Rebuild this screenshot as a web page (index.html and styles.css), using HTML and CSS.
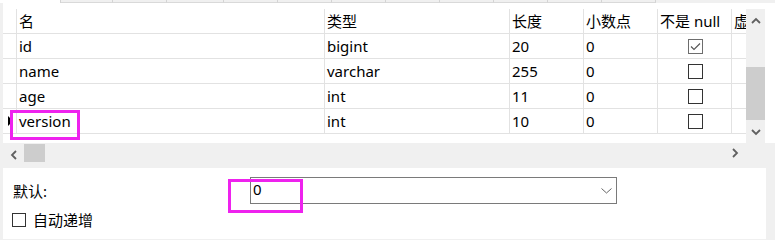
FILE: index.html
```html
<!DOCTYPE html>
<html>
<head>
<meta charset="utf-8">
<link rel="stylesheet" href="styles.css">
</head>
<body>
<div class="window">
  <div class="tabs">
    <div class="tab tab-active"></div>
    <div class="tab w52"></div>
    <div class="tab w54"></div>
    <div class="tab w57"></div>
    <div class="tab w54"></div>
    <div class="tab w54"></div>
    <div class="tab w54"></div>
    <div class="tab w54"></div>
    <div class="tab w54"></div>
    <div class="tab w54"></div>
    <div class="tab w54"></div>
    <div class="tab w54"></div>
  </div>
  <div class="main">
    <div class="gridwrap">
      <div class="table">
        <div class="row head">
          <div class="cell gut"></div>
          <div class="cell">名</div>
          <div class="cell">类型</div>
          <div class="cell">长度</div>
          <div class="cell">小数点</div>
          <div class="cell">不是 null</div>
          <div class="cell">虚拟</div>
        </div>
        <div class="row">
          <div class="cell gut"></div>
          <div class="cell">id</div>
          <div class="cell">bigint</div>
          <div class="cell">20</div>
          <div class="cell">0</div>
          <div class="cell center"><span class="cb checked"><svg width="11" height="9" viewBox="0 0 11 9"><path d="M1 4.5 L4 7.5 L10 1.5" fill="none" stroke="#555" stroke-width="1.1"/></svg></span></div>
          <div class="cell"></div>
        </div>
        <div class="row">
          <div class="cell gut"></div>
          <div class="cell">name</div>
          <div class="cell">varchar</div>
          <div class="cell">255</div>
          <div class="cell">0</div>
          <div class="cell center"><span class="cb"></span></div>
          <div class="cell"></div>
        </div>
        <div class="row">
          <div class="cell gut"></div>
          <div class="cell">age</div>
          <div class="cell">int</div>
          <div class="cell">11</div>
          <div class="cell">0</div>
          <div class="cell center"><span class="cb"></span></div>
          <div class="cell"></div>
        </div>
        <div class="row">
          <div class="cell gut"><span class="rowmark"></span></div>
          <div class="cell">version</div>
          <div class="cell">int</div>
          <div class="cell">10</div>
          <div class="cell">0</div>
          <div class="cell center"><span class="cb"></span></div>
          <div class="cell"></div>
        </div>
      </div>
      <div class="vscroll">
        <div class="varrow"><svg width="10" height="7" viewBox="0 0 10 7"><path d="M1 6 L5 2 L9 6" fill="none" stroke="#606060" stroke-width="1.8"/></svg></div>
        <div class="vtrack"><div class="vthumb"></div></div>
        <div class="varrow"><svg width="10" height="7" viewBox="0 0 10 7"><path d="M1 1 L5 5 L9 1" fill="none" stroke="#606060" stroke-width="1.8"/></svg></div>
      </div>
    </div>
    <div class="hscroll">
      <div class="harea">
        <div class="harrow"><svg width="7" height="10" viewBox="0 0 7 10"><path d="M6 1 L2 5 L6 9" fill="none" stroke="#606060" stroke-width="1.8"/></svg></div>
        <div class="hthumb"></div>
        <div class="hspace"></div>
        <div class="harrow"><svg width="7" height="10" viewBox="0 0 7 10"><path d="M1 1 L5 5 L1 9" fill="none" stroke="#606060" stroke-width="1.8"/></svg></div>
      </div>
    </div>
    <div class="props">
      <div class="prow">
        <div class="plabel">默认:</div>
        <div class="combo"><span class="cval">0</span><svg class="chev" width="11" height="6" viewBox="0 0 11 6"><path d="M0.5 0.5 L5.5 5 L10.5 0.5" fill="none" stroke="#666" stroke-width="1"/></svg></div>
      </div>
      <div class="crow">
        <span class="cb2"></span><span class="clabel">自动递增</span>
      </div>
    </div>
  </div>
  <div class="mark mark1"></div>
  <div class="mark mark2"></div>
</div>
</body>
</html>
```
FILE: styles.css
```css
html, body {
  margin: 0;
  padding: 0;
}
body {
  background: #f0f0f0;
  font-family: "Noto Sans", "Noto Sans CJK SC", sans-serif;
  font-size: 15px;
  color: #000;
}
.window {
  position: relative;
  width: 775px;
  height: 239px;
  overflow: hidden;
}
.tabs {
  display: flex;
  height: 3px;
  overflow: hidden;
}
.tab {
  flex: none;
  height: 2px;
  background: #f0f0f0;
  border-right: 1px solid #d4d4d4;
  border-bottom: 1px solid #d9d9d9;
}
.tab-active {
  width: 60px;
  background: #fff;
  border-bottom: none;
  height: 3px;
}
.w52 { width: 51px; }
.w54 { width: 53px; }
.w57 { width: 56px; }
.main {
  display: flex;
  flex-direction: column;
  padding-left: 3px;
}
.gridwrap {
  display: flex;
  height: 140px;
  background: #fff;
}
.table {
  width: 743px;
  overflow: hidden;
  padding-top: 6px;
  box-sizing: border-box;
}
.row {
  display: grid;
  grid-template-columns: 14px 308px 185px 74px 74px 74px 74px;
  height: 25px;
}
.cell {
  box-sizing: border-box;
  border-right: 1px solid #e2e2e2;
  border-bottom: 1px solid #e2e2e2;
  padding-left: 2px;
  display: flex;
  align-items: center;
  white-space: nowrap;
  overflow: hidden;
  line-height: 1;
}
.cell.gut {
  padding-left: 0;
  position: relative;
}
.cell.center {
  justify-content: center;
  padding-left: 0;
}
.rowmark {
  position: absolute;
  left: 5px;
  top: 7px;
  width: 0;
  height: 0;
  border-top: 5px solid transparent;
  border-bottom: 5px solid transparent;
  border-left: 5px solid #000;
}
.cb {
  width: 15px;
  height: 15px;
  box-sizing: border-box;
  border: 1px solid #333;
  background: #fff;
  display: flex;
  align-items: center;
  justify-content: center;
  margin-left: 1px;
}
.cb.checked {
  border-color: #6d6d6d;
}
.vscroll {
  width: 19px;
  margin-top: 6px;
  height: 134px;
  background: #f0f0f0;
  display: flex;
  flex-direction: column;
}
.varrow {
  height: 22px;
  display: flex;
  align-items: center;
  justify-content: center;
}
.vtrack {
  flex: 1;
  display: flex;
  flex-direction: column;
  justify-content: flex-end;
  padding-bottom: 1px;
}
.vthumb {
  height: 53px;
  background: #cdcdcd;
}
.hscroll {
  height: 25px;
  background: #f0f0f0;
}
.harea {
  width: 743px;
  height: 19px;
  display: flex;
  align-items: stretch;
}
.harrow {
  width: 21px;
  display: flex;
  align-items: center;
  justify-content: center;
  padding-top: 4px;
  box-sizing: border-box;
}
.harea .harrow:last-child {
  padding-top: 0;
}
.hthumb {
  width: 21px;
  margin-top: 1px;
  background: #cdcdcd;
}
.hspace {
  flex: 1;
}
.props {
  width: 763px;
  height: 71px;
  background: #fff;
  display: flex;
  flex-direction: column;
  padding: 9px 0 0 10px;
  box-sizing: border-box;
}
.prow {
  display: flex;
  align-items: center;
  height: 27px;
}
.plabel {
  width: 237px;
  padding-bottom: 1px;
}
.combo {
  width: 367px;
  height: 27px;
  box-sizing: border-box;
  border: 1px solid #7a7a7a;
  display: flex;
  align-items: center;
  justify-content: space-between;
  padding: 0 4px 1px 2px;
  line-height: 1;
}
.cval {
  margin-top: -2px;
}
.chev {
  margin-top: 1px;
}
.crow {
  display: flex;
  align-items: center;
  height: 14px;
  margin-top: 9px;
  margin-left: -1px;
  line-height: 1;
}
.cb2 {
  flex: none;
  width: 14px;
  height: 14px;
  box-sizing: border-box;
  border: 1px solid #333;
  margin-right: 7px;
}
.clabel {
  margin-top: 1px;
}
.mark {
  position: absolute;
  border: 3px solid #ee22ee;
  box-sizing: border-box;
}
.mark1 {
  left: 10px;
  top: 110px;
  width: 70px;
  height: 30px;
}
.mark2 {
  left: 228px;
  top: 179px;
  width: 75px;
  height: 34px;
}
```
